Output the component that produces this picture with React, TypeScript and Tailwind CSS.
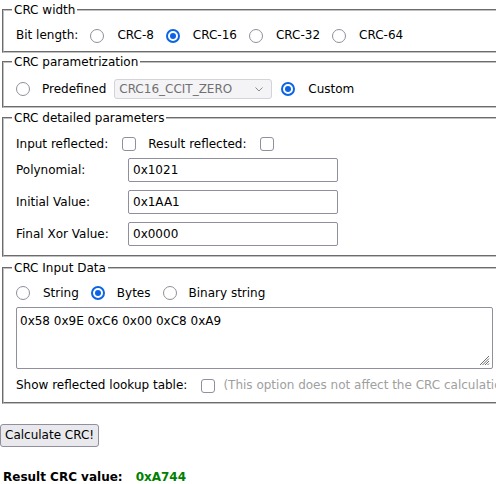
import React from "react";

function Radio({ checked }: { checked?: boolean }) {
  if (checked) {
    return (
      <span className="flex h-[14px] w-[14px] shrink-0 items-center justify-center rounded-full border-2 border-[#0b63e5]">
        <span className="block h-[6px] w-[6px] rounded-full bg-[#0b63e5]" />
      </span>
    );
  }
  return <span className="block h-[14px] w-[14px] shrink-0 rounded-full border border-[#8f8f9d]" />;
}

function Check() {
  return <span className="block h-[14px] w-[14px] shrink-0 rounded-[3px] border border-[#8f8f9d]" />;
}

function Group({ title, className, children }: { title: string; className: string; children: React.ReactNode }) {
  return (
    <fieldset
      className={`mx-[2px] w-[700px] border-2 border-[#c0c0c0] px-[12px] [border-style:groove] ${className}`}
    >
      <legend className="-ml-[4px] h-[16px] px-[2px] leading-[16px]">{title}</legend>
      {children}
    </fieldset>
  );
}

function Field({ label, value }: { label: string; value: string }) {
  return (
    <div className="mt-[8px] flex h-[24px] items-center">
      <span className="w-[112px]">{label}</span>
      <input
        readOnly
        value={value}
        className="h-[24px] w-[210px] rounded-[2px] border border-[#8f8f9d] px-[4px] text-black outline-none"
      />
    </div>
  );
}

const widths = ["CRC-8", "CRC-16", "CRC-32", "CRC-64"];

export default function App() {
  return (
    <div className="h-[484px] w-[496px] overflow-hidden bg-white font-['DejaVu_Sans',sans-serif] text-[12px] leading-[15px] text-black">
      <Group title="CRC width" className="mt-[2px] pt-[9px] pb-[7px]">
        <div className="flex h-[17px] items-center whitespace-nowrap">
          <span>Bit length:</span>
          {widths.map((w) => (
            <span key={w} className="ml-[12px] flex items-center">
              <Radio checked={w === "CRC-16"} />
              <span className="ml-[13px]">{w}</span>
            </span>
          ))}
        </div>
      </Group>

      <Group title="CRC parametrization" className="mt-[1px] pt-[9px] pb-[7px]">
        <div className="flex h-[20px] items-center whitespace-nowrap">
          <Radio />
          <span className="ml-[12px]">Predefined</span>
          <div className="relative ml-[8px] flex h-[20px] w-[158px] items-center rounded-[3px] border border-[#d3d3d8] bg-[#f4f4f6] px-[4px] text-[#707070]">
            CRC16_CCIT_ZERO
            <svg className="absolute right-[8px] top-[7px]" width="8" height="5" viewBox="0 0 8 5">
              <path d="M0.5 0.5 L4 4 L7.5 0.5" fill="none" stroke="#8a8a8a" strokeWidth="1" />
            </svg>
          </div>
          <span className="ml-[9px]">
            <Radio checked />
          </span>
          <span className="ml-[13px]">Custom</span>
        </div>
      </Group>

      <Group title="CRC detailed parameters" className="mt-[2px] pt-[8px] pb-[9px]">
        <div className="flex h-[20px] items-center whitespace-nowrap">
          <span>Input reflected:</span>
          <span className="ml-[14px]">
            <Check />
          </span>
          <span className="ml-[12px]">Result reflected:</span>
          <span className="ml-[14px]">
            <Check />
          </span>
        </div>
        <div className="-mt-[4px]" />
        <Field label="Polynomial:" value="0x1021" />
        <Field label="Initial Value:" value="0x1AA1" />
        <Field label="Final Xor Value:" value="0x0000" />
      </Group>

      <Group title="CRC Input Data" className="mt-[3px] pt-[8px] pb-[8px]">
        <div className="flex h-[18px] items-center whitespace-nowrap">
          <Radio />
          <span className="ml-[13px]">String</span>
          <span className="ml-[12px]">
            <Radio checked />
          </span>
          <span className="ml-[12px]">Bytes</span>
          <span className="ml-[12px]">
            <Radio />
          </span>
          <span className="ml-[12px]">Binary string</span>
        </div>
        <div className="relative mt-[5px] h-[62px] w-[477px]">
          <textarea
            readOnly
            value="0x58 0x9E 0xC6 0x00 0xC8 0xA9"
            className="block h-[62px] w-[477px] resize-none rounded-[2px] border border-[#8f8f9d] px-[3px] pt-[6px] text-black outline-none"
          />
          <svg className="absolute bottom-[3px] right-[3px]" width="11" height="11" viewBox="0 0 11 11">
            <path d="M10 1 L1 10 M10 3.5 L3.5 10 M10 6 L6 10 M10 8.5 L8.5 10" stroke="#6e6e6e" strokeWidth="1" />
          </svg>
        </div>
        <div className="mt-[8px] flex h-[17px] items-center whitespace-nowrap">
          <span>Show reflected lookup table:</span>
          <span className="ml-[14px]">
            <Check />
          </span>
          <span className="ml-[8px] text-[#a0a0a0]">
            (This option does not affect the CRC calculation, only the displayed lookup table)
          </span>
        </div>
      </Group>

      <div className="mt-[20px]">
        <button className="h-[23px] rounded-[3px] border border-[#8f8f9d] bg-[#e9e9ed] px-[4px] leading-[15px] text-black">
          Calculate CRC!
        </button>
      </div>

      <div className="ml-[3px] mt-[23px] h-[15px] whitespace-nowrap font-bold">
        Result CRC value:
        <span className="ml-[13px] text-[#008000]">0xA744</span>
      </div>
    </div>
  );
}
